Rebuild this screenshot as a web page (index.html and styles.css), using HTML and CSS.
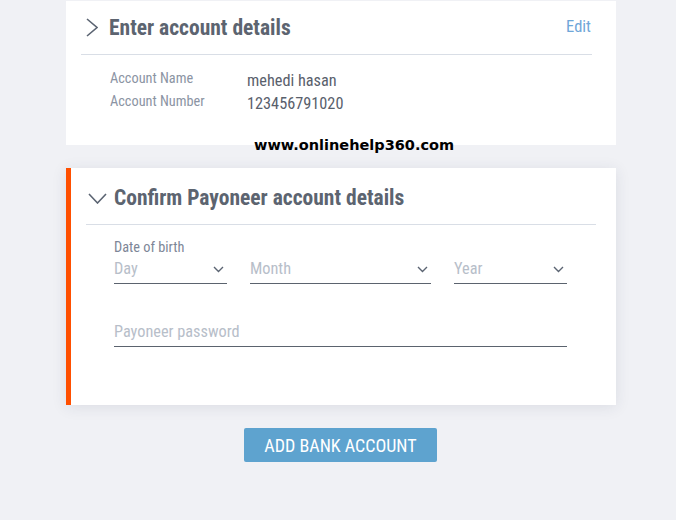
FILE: index.html
```html
<!DOCTYPE html>
<html>
<head>
<meta charset="utf-8">
<link rel="stylesheet" href="styles.css">
</head>
<body>
<div class="page">
  <section class="card card-done">
    <div class="card-head">
      <svg class="chev-right" width="12" height="19" viewBox="0 0 12 19"><path d="M1 1 L11 9.5 L1 18" fill="none" stroke="#5b6472" stroke-width="1.6"/></svg>
      <h2 class="card-title">Enter account details</h2>
      <a class="edit">Edit</a>
    </div>
    <div class="details">
      <div class="row"><span class="lbl">Account Name</span><span class="val">mehedi hasan</span></div>
      <div class="row"><span class="lbl">Account Number</span><span class="val">123456791020</span></div>
    </div>
  </section>

  <div class="watermark">www.onlinehelp360.com</div>

  <section class="card card-active">
    <div class="card-head head-active">
      <svg class="chev-down" width="19" height="11" viewBox="0 0 19 11"><path d="M1 1 L9.5 10 L18 1" fill="none" stroke="#5b6472" stroke-width="1.6"/></svg>
      <h2 class="card-title">Confirm Payoneer account details</h2>
    </div>
    <div class="form">
      <div class="field-label">Date of birth</div>
      <div class="dob">
        <div class="select s-day"><span>Day</span><svg width="11" height="7" viewBox="0 0 11 7"><path d="M1 1 L5.5 5.5 L10 1" fill="none" stroke="#5b6472" stroke-width="1.4"/></svg></div>
        <div class="select s-month"><span>Month</span><svg width="11" height="7" viewBox="0 0 11 7"><path d="M1 1 L5.5 5.5 L10 1" fill="none" stroke="#5b6472" stroke-width="1.4"/></svg></div>
        <div class="select s-year"><span>Year</span><svg width="11" height="7" viewBox="0 0 11 7"><path d="M1 1 L5.5 5.5 L10 1" fill="none" stroke="#5b6472" stroke-width="1.4"/></svg></div>
      </div>
      <div class="input"><span>Payoneer password</span></div>
    </div>
  </section>

  <div class="actions">
    <button class="btn">ADD BANK ACCOUNT</button>
  </div>
</div>
</body>
</html>
```

FILE: styles.css
```css
* { box-sizing: border-box; }
html, body { margin: 0; padding: 0; }
body {
  background: #f0f1f5;
  font-family: "Roboto Condensed", "Liberation Sans Narrow", Roboto, sans-serif;
  width: 676px;
  height: 520px;
  overflow: hidden;
}
.page {
  position: relative;
  width: 550px;
  margin-left: 66px;
  padding-top: 1px;
}
.card {
  background: #fff;
}
.card-done {
  height: 144px;
}
.card-head {
  display: flex;
  align-items: center;
  height: 54px;
  margin: 0 24px 0 15px;
  border-bottom: 1px solid #d9dee6;
}
.chev-right {
  margin-left: 5px;
  margin-right: 11px;
}
.card-title {
  margin: 0;
  font-size: 21.5px;
  font-weight: 700;
  color: #5c6470;
  flex: 1;
}
.edit {
  font-size: 16.5px;
  color: #6fa6d8;
  align-self: flex-start;
  margin-top: 16px;
  margin-right: 1px;
}
.details {
  padding: 13px 0 0 44px;
}
.row {
  display: flex;
  align-items: baseline;
  height: 23px;
}
.lbl {
  width: 137px;
  font-size: 14.3px;
  color: #8b94a3;
}
.val {
  font-size: 16.3px;
  color: #59606c;
  position: relative;
  top: 3px;
}
.watermark {
  position: absolute;
  left: 188px;
  top: 137px;
  font-family: "DejaVu Sans", Verdana, sans-serif;
  font-weight: 700;
  font-size: 14.5px;
  color: #000;
}
.card-active {
  margin-top: 23px;
  height: 237px;
  border-left: 5px solid #ff4f00;
  box-shadow: 0 2px 14px rgba(40, 50, 80, 0.10);
}
.head-active {
  height: 57px;
  padding-top: 3px;
  margin: 0 20px 0 15px;
}
.chev-down {
  margin-left: 2px;
  margin-right: 7px;
  margin-top: 1px;
}
.form {
  padding: 13px 49px 0 43px;
}
.field-label {
  font-size: 14.3px;
  color: #7d8697;
  line-height: 18px;
}
.dob {
  display: flex;
  gap: 23px;
  margin-top: 1px;
}
.select {
  display: flex;
  align-items: flex-start;
  justify-content: space-between;
  height: 27px;
  padding-top: 1px;
  border-bottom: 1px solid #5b636e;
  padding-right: 3px;
}
.select span, .input span {
  font-size: 16.3px;
  line-height: 22px;
  color: #b7bec9;
}
.select svg {
  margin-top: 8px;
}
.s-day { width: 113px; }
.s-month { width: 181px; }
.s-year { width: 113px; }
.input {
  margin-top: 36px;
  height: 27px;
  padding-top: 1px;
  border-bottom: 1px solid #5b636e;
  display: flex;
  align-items: flex-start;
}
.actions {
  display: flex;
  justify-content: center;
  margin-top: 23px;
  padding-right: 1px;
}
.btn {
  width: 193px;
  height: 34px;
  border: none;
  border-radius: 2px;
  background: #5ea3cf;
  color: #fff;
  font-family: inherit;
  font-size: 18px;
  padding: 0;
}
```
